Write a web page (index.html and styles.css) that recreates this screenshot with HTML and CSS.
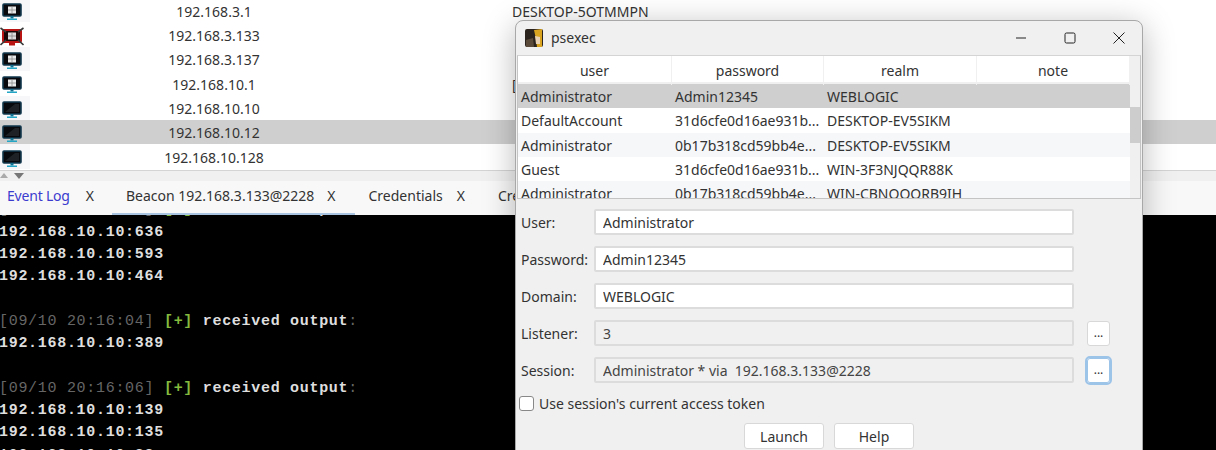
FILE: index.html
```html
<!DOCTYPE html>
<html lang="en">
<head>
    <meta charset="UTF-8">
    <title>psexec</title>
    <link rel="stylesheet" href="styles.css">
</head>
<body>

<svg class="defs" width="0" height="0">
    <symbol id="monitor" viewBox="0 0 22 20">
        <rect x="2" y="2" width="18" height="12" rx="1" fill="#07090c" stroke="#12384d" stroke-width="1.6"/>
        <path d="M4 12 L14 4 H18 V12 Z" fill="#1e2226"/>
        <rect x="9.5" y="14" width="3" height="2.5" fill="#14708f"/>
        <rect x="6" y="16.5" width="10" height="1.5" fill="#23a5c6"/>
    </symbol>
    <symbol id="monitor-win" viewBox="0 0 22 20">
        <rect x="2" y="2" width="18" height="12" rx="1" fill="#07090c" stroke="#12384d" stroke-width="1.6"/>
        <path d="M7 4.5 H15 V11.5 H7 Z" fill="#e8e8e8"/>
        <path d="M11 4.5 V11.5 M7 8 H15" stroke="#8a8a8a" stroke-width="0.8"/>
        <rect x="9.5" y="14" width="3" height="2.5" fill="#14708f"/>
        <rect x="6" y="16.5" width="10" height="1.5" fill="#23a5c6"/>
    </symbol>
    <symbol id="monitor-dead" viewBox="0 0 24 20">
        <rect x="3" y="3" width="18" height="12" rx="1" fill="#1a0808" stroke="#b81414" stroke-width="2"/>
        <path d="M8 5.5 H16 V12.5 H8 Z" fill="#dcdcdc"/>
        <path d="M12 5.5 V12.5 M8 9 H16" stroke="#888" stroke-width="0.8"/>
        <path d="M0.5 1 L6 5 M23.5 1 L18 5 M0.5 18 L6 13 M23.5 18 L18 13" stroke="#3a3a3a" stroke-width="1.6"/>
        <rect x="9" y="15" width="6" height="3.5" fill="#b81414"/>
    </symbol>
</svg>

<div class="hosts">
    <div class="host-row">
        <div class="host-icon"><svg><use href="#monitor-win"/></svg></div>
        <div class="host-ip">192.168.3.1</div>
        <div class="host-name">DESKTOP-5OTMMPN</div>
    </div>
    <div class="host-row">
        <div class="host-icon"><svg class="wide"><use href="#monitor-dead"/></svg></div>
        <div class="host-ip">192.168.3.133</div>
        <div class="host-name"></div>
    </div>
    <div class="host-row">
        <div class="host-icon"><svg><use href="#monitor-win"/></svg></div>
        <div class="host-ip">192.168.3.137</div>
        <div class="host-name"></div>
    </div>
    <div class="host-row">
        <div class="host-icon"><svg><use href="#monitor-win"/></svg></div>
        <div class="host-ip">192.168.10.1</div>
        <div class="host-name">[</div>
    </div>
    <div class="host-row">
        <div class="host-icon"><svg><use href="#monitor"/></svg></div>
        <div class="host-ip">192.168.10.10</div>
        <div class="host-name"></div>
    </div>
    <div class="host-row selected">
        <div class="host-icon"><svg><use href="#monitor"/></svg></div>
        <div class="host-ip">192.168.10.12</div>
        <div class="host-name"></div>
    </div>
    <div class="host-row">
        <div class="host-icon"><svg><use href="#monitor"/></svg></div>
        <div class="host-ip">192.168.10.128</div>
        <div class="host-name"></div>
    </div>
</div>

<div class="splitter">
    <span class="arrow-up"></span>
    <span class="arrow-down"></span>
</div>

<div class="tabs">
    <div class="tab first"><span class="tab-title blue">Event Log</span><span class="tab-x">X</span></div>
    <div class="tab active"><span class="tab-title">Beacon 192.168.3.133@2228</span><span class="tab-x">X</span></div>
    <div class="tab"><span class="tab-title">Credentials</span><span class="tab-x">X</span></div>
    <div class="tab"><span class="tab-title">Credentials</span><span class="tab-x">X</span></div>
</div>

<div class="console">
    <div class="line"><span class="time">[09/10 20:16:02]</span> <span class="plus">[+]</span> received output<span class="time">:</span></div>
    <div class="line">192.168.10.10:636</div>
    <div class="line">192.168.10.10:593</div>
    <div class="line">192.168.10.10:464</div>
    <div class="line">&nbsp;</div>
    <div class="line"><span class="time">[09/10 20:16:04]</span> <span class="plus">[+]</span> received output<span class="time">:</span></div>
    <div class="line">192.168.10.10:389</div>
    <div class="line">&nbsp;</div>
    <div class="line"><span class="time">[09/10 20:16:06]</span> <span class="plus">[+]</span> received output<span class="time">:</span></div>
    <div class="line">192.168.10.10:139</div>
    <div class="line">192.168.10.10:135</div>
    <div class="line">192.168.10.10:88</div>
</div>

<!-- psexec dialog, floats over the main window -->
<div class="dialog">
    <div class="titlebar">
        <svg class="app-icon" viewBox="0 0 18 18">
            <rect width="18" height="18" rx="2" fill="#2a231d"/>
            <path d="M9 1 L17 0 V18 H12 L11 10 Z" fill="#d9a520"/>
            <path d="M10 7 L15 8 V15 L11 15 Z" fill="#e9d2b4"/>
            <path d="M1 11 L8 9 L9 18 H1 Z" fill="#5a4a3a"/>
        </svg>
        <span class="title">psexec</span>
        <div class="win-buttons">
            <svg viewBox="0 0 12 12"><path d="M1 6 H11" stroke="#222" fill="none"/></svg>
            <svg viewBox="0 0 12 12"><rect x="1" y="1" width="10" height="10" rx="1.5" stroke="#222" fill="none"/></svg>
            <svg viewBox="0 0 12 12"><path d="M0.5 0.5 L11.5 11.5 M11.5 0.5 L0.5 11.5" stroke="#222" fill="none"/></svg>
        </div>
    </div>

    <div class="creds">
        <div class="creds-body">
            <div class="creds-head">
                <div>user</div>
                <div>password</div>
                <div>realm</div>
                <div>note</div>
            </div>
            <div class="creds-row selected">
                <div>Administrator</div><div>Admin12345</div><div>WEBLOGIC</div><div></div>
            </div>
            <div class="creds-row">
                <div>DefaultAccount</div><div>31d6cfe0d16ae931b...</div><div>DESKTOP-EV5SIKM</div><div></div>
            </div>
            <div class="creds-row alt">
                <div>Administrator</div><div>0b17b318cd59bb4e...</div><div>DESKTOP-EV5SIKM</div><div></div>
            </div>
            <div class="creds-row">
                <div>Guest</div><div>31d6cfe0d16ae931b...</div><div>WIN-3F3NJQQR88K</div><div></div>
            </div>
            <div class="creds-row alt">
                <div>Administrator</div><div>0b17b318cd59bb4e...</div><div>WIN-CBNOOORB9IH</div><div></div>
            </div>
        </div>
        <div class="scrollbar"><div class="thumb"></div></div>
    </div>

    <div class="form">
        <label>User:</label>
        <input type="text" value="Administrator">
        <span></span>

        <label>Password:</label>
        <input type="text" value="Admin12345">
        <span></span>

        <label>Domain:</label>
        <input type="text" value="WEBLOGIC">
        <span></span>

        <label>Listener:</label>
        <input type="text" value="3" disabled>
        <button class="more">...</button>

        <label>Session:</label>
        <input type="text" value="Administrator * via  192.168.3.133@2228" disabled>
        <button class="more focused">...</button>
    </div>

    <div class="check-row">
        <span class="checkbox"></span>
        <span>Use session's current access token</span>
    </div>

    <div class="actions">
        <button class="action">Launch</button>
        <button class="action">Help</button>
    </div>
</div>

</body>
</html>
```

FILE: styles.css
```css
* {
    box-sizing: border-box;
}
html, body {
    height: 450px;
    overflow: hidden;
}
body {
    font-family: "Noto Sans", Arial, sans-serif;
    font-size: 14px;
    color: #333;
    background-color: #fff;
    margin: 0;
    padding: 0;
    display: flex;
    flex-direction: column;
}
.defs {
    position: absolute;
}

/* Host table */
.hosts {
    margin-top: -2px;
}
.host-row {
    display: grid;
    grid-template-columns: 30px 366px 1fr;
    height: 24.4px;
    line-height: 24.4px;
    white-space: nowrap;
}
.host-row.selected {
    background-color: #cfcfcf;
}
.host-row:nth-child(odd) .host-icon {
    background-color: #f7f7fa;
}
.host-row.selected .host-icon {
    background-color: #cfcfcf !important;
}
.host-icon {
    display: flex;
    align-items: center;
    padding: 4px 0 0 1px;
    height: 24.4px;
}
.host-icon svg {
    width: 22px;
    height: 20px;
}
.host-icon svg.wide {
    width: 24px;
    margin-left: -1px;
}
.host-ip {
    text-align: center;
    padding: 1.5px 0 0 2px;
}
.host-name {
    padding: 1.5px 0 0 116px;
}

.splitter {
    height: 11px;
    margin-top: 1px;
    background-color: #f0f0f0;
    border-top: 1px solid #d4d4d4;
    display: flex;
    align-items: center;
    gap: 6px;
}
.arrow-up {
    width: 0;
    height: 0;
    border-left: 4px solid transparent;
    border-right: 4px solid transparent;
    border-bottom: 5px solid #aaa;
}
.arrow-down {
    width: 0;
    height: 0;
    border-left: 5px solid transparent;
    border-right: 5px solid transparent;
    border-top: 6px solid #777;
}

/* Tabs */
.tabs {
    height: 34px;
    background-color: #f8f8f8;
    display: flex;
}
.tab {
    display: flex;
    align-items: center;
    gap: 14px;
    padding: 0 19px 4px 14px;
    white-space: nowrap;
}
.tab.first {
    gap: 16px;
    padding-left: 7px;
    padding-right: 18px;
}
.tab.active {
    gap: 13px;
    padding-bottom: 2px;
    border-bottom: 2px solid #a9c4e0;
}
.tab-title.blue {
    color: #3c3ccf;
    letter-spacing: -0.2px;
}
.tab-x {
    color: #333;
}

/* Beacon console */
.console {
    flex: 1;
    background-color: #000;
    color: #dedede;
    font-family: "Liberation Mono", "Courier New", monospace;
    font-size: 15px;
    letter-spacing: 0.7px;
    font-weight: bold;
    overflow: hidden;
}
.line {
    height: 22.3px;
    line-height: 22.3px;
    white-space: pre;
    margin-left: -1px;
}
.line:first-child {
    margin-top: -15.3px;
}
.time {
    color: #666;
    font-weight: normal;
}
.plus {
    color: #84bb3e;
}

/* Dialog */
.dialog {
    position: absolute;
    left: 515px;
    top: 20px;
    width: 628px;
    height: 440px;
    background-color: #f0f0f0;
    border: 1px solid #a8a8a8;
    border-radius: 8px 8px 0 0;
    box-shadow: 0 6px 32px rgba(0, 0, 0, 0.28);
}
.titlebar {
    height: 34px;
    display: flex;
    align-items: center;
    padding-left: 9px;
}
.app-icon {
    width: 18px;
    height: 18px;
}
.title {
    margin: 0 0 2px 8px;
}
.win-buttons {
    margin-left: auto;
    display: flex;
    gap: 37px;
    padding-right: 17px;
}
.win-buttons svg {
    width: 12px;
    height: 12px;
}

.creds {
    height: 144px;
    margin: 0 1px;
    border: 1px solid #c4c4c4;
    border-top-color: #d4d4d4;
    display: flex;
    overflow: hidden;
}
.creds-body {
    width: 612px;
    background-color: #fff;
}
.creds-head,
.creds-row {
    display: grid;
    grid-template-columns: 154px 152px 153px 153px;
}
.creds-head {
    height: 28px;
    line-height: 29px;
    text-align: center;
    border-bottom: 2px solid #f0f0f0;
}
.creds-head div {
    border-right: 1px solid #f0f0f0;
}
.creds-row {
    height: 24.3px;
    line-height: 26px;
    white-space: nowrap;
}
.creds-row div {
    padding-left: 3px;
}
.creds-row.selected {
    background-color: #cfcfcf;
}
.creds-row.alt {
    background-color: #f6f7f9;
}
.scrollbar {
    flex: 1;
    background-color: #f0f0f0;
    padding-top: 51px;
}
.thumb {
    width: 10px;
    height: 36px;
    background-color: #cdcdcd;
}

.form {
    display: grid;
    grid-template-columns: 73px 480px 23px;
    grid-auto-rows: 26px;
    column-gap: 0;
    row-gap: 11px;
    align-items: center;
    padding: 10px 0 0 5px;
}
.form label {
    padding-top: 1px;
    padding-bottom: 1px;
}
.form input {
    width: 100%;
    height: 100%;
    font-family: inherit;
    font-size: 14px;
    color: #333;
    background-color: #fff;
    border: 2px solid #dcdcdc;
    border-radius: 2px;
    padding: 0 7px;
    outline: none;
}
.form input:disabled {
    background-color: #f0f0f0;
    color: #444;
}
.more {
    grid-column: 3;
    width: 23px;
    height: 25px;
    margin-left: 13px;
    font-family: inherit;
    font-size: 12px;
    line-height: 20px;
    color: #333;
    background-color: #fff;
    border: 1px solid #d8d8d8;
    border-radius: 3px;
    padding: 0;
}
.more.focused {
    outline: 2px solid #9cc3e8;
    border-color: #9cc3e8;
}
.check-row {
    display: flex;
    align-items: center;
    gap: 5px;
    margin: 12px 0 0 3px;
    height: 16px;
}
.checkbox {
    width: 15px;
    height: 15px;
    background-color: #fff;
    border: 1px solid #888;
    border-radius: 3px;
}
.actions {
    display: flex;
    justify-content: center;
    gap: 10px;
    margin-top: 12px;
}
.action {
    width: 80px;
    height: 26px;
    font-family: inherit;
    font-size: 14px;
    color: #333;
    background-color: #fff;
    border: 1px solid #d8d8d8;
    border-radius: 3px;
    padding: 0;
}
```
